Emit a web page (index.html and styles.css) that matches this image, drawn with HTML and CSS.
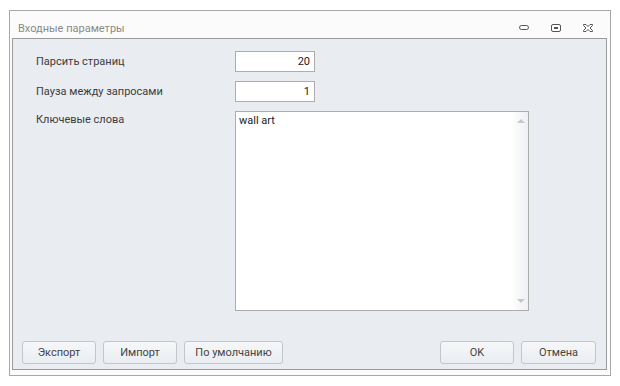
FILE: index.html
```html
<!DOCTYPE html>
<html lang="ru">
    <head>
        <meta charset="UTF-8">
        <title>Входные параметры</title>
        <link rel="stylesheet" href="styles.css">
    </head>
    <body>
        <div class="window">
            <div class="title-bar">
                <span class="title">Входные параметры</span>
                <div class="controls">
                    <svg width="12" height="8" viewBox="0 0 12 8"><rect x="1.5" y="2.5" width="9" height="4" rx="2" fill="none" stroke="#555"/></svg>
                    <svg width="12" height="10" viewBox="0 0 12 10"><rect x="1.5" y="1.5" width="9" height="7" rx="1.5" fill="none" stroke="#555"/><rect x="4" y="4" width="4" height="2" fill="#555"/></svg>
                    <svg width="12" height="10" viewBox="0 0 12 10"><path d="M1.5 1.5 L4 1.5 L6 3.5 L8 1.5 L10.5 1.5 L10.5 2.5 L8 5 L10.5 7.5 L10.5 8.5 L8 8.5 L6 6.5 L4 8.5 L1.5 8.5 L1.5 7.5 L4 5 L1.5 2.5 Z" fill="none" stroke="#555"/></svg>
                </div>
            </div>
            <div class="panel">
                <div class="form">
                    <label>Парсить страниц</label>
                    <input class="num" type="text" value="20">
                    <label>Пауза между запросами</label>
                    <input class="num" type="text" value="1">
                    <label class="top">Ключевые слова</label>
                    <div class="memo">
                        <div class="memo-text">wall art</div>
                        <div class="scroll">
                            <span class="arrow-up"></span>
                            <span class="arrow-down"></span>
                        </div>
                    </div>
                </div>
                <div class="buttons">
                    <button class="btn">Экспорт</button>
                    <button class="btn">Импорт</button>
                    <button class="btn wide">По умолчанию</button>
                    <span class="spacer"></span>
                    <button class="btn">OK</button>
                    <button class="btn last">Отмена</button>
                </div>
            </div>
        </div>
    </body>
</html>
```

FILE: styles.css
```css
body {
    margin: 0;
    background-color: #ffffff;
    font-family: Roboto, "Noto Sans", Arial, sans-serif;
    font-size: 11px;
    color: #3c3c3c;
}

.window {
    margin: 10px 9px 0 9px;
    width: 600px;
    height: 364px;
    border: 1px solid #a8a8a8;
    background-color: #fbfbfb;
    display: flex;
    flex-direction: column;
}

.title-bar {
    height: 27px;
    display: flex;
    align-items: center;
    justify-content: space-between;
    padding-left: 8px;
}

.title {
    color: #8a8a8a;
    padding-top: 7px;
}

.controls {
    display: flex;
    gap: 20px;
    padding-right: 16px;
    padding-top: 6px;
}

.panel {
    flex: 1;
    margin: 0 3px 5px 2px;
    border: 1px solid #9a9a9a;
    background-color: #e9ecf1;
    display: flex;
    flex-direction: column;
    padding: 12px 10px 5px 9px;
}

.form {
    flex: 1;
    display: grid;
    grid-template-columns: 199px 294px;
    grid-template-rows: 21px 21px 200px;
    row-gap: 9px;
    padding-left: 14px;
}

.form label {
    display: flex;
    align-items: center;
    height: 21px;
}

.form label.top {
    height: 16px;
}

.num {
    width: 80px;
    height: 21px;
    box-sizing: border-box;
    border: 1px solid #adadad;
    background-color: #ffffff;
    text-align: right;
    padding: 0 4px;
    font-family: inherit;
    font-size: 11px;
    color: #222;
    margin: 0;
}

.memo {
    display: flex;
    border: 1px solid #adadad;
    background-color: #ffffff;
}

.memo-text {
    flex: 1;
    padding: 2px 3px;
    color: #222;
}

.scroll {
    width: 15px;
    background: linear-gradient(to right, #fdfdfd, #eef0f3);
    display: flex;
    flex-direction: column;
    justify-content: space-between;
    align-items: center;
    padding: 7px 0;
}

.arrow-up {
    width: 0;
    height: 0;
    border-left: 4px solid transparent;
    border-right: 4px solid transparent;
    border-bottom: 4px solid #c4c8cd;
}

.arrow-down {
    width: 0;
    height: 0;
    border-left: 4px solid transparent;
    border-right: 4px solid transparent;
    border-top: 4px solid #c4c8cd;
}

.buttons {
    display: flex;
    gap: 7px;
}

.btn {
    width: 74px;
    height: 23px;
    border: 1px solid #c3c6cc;
    border-radius: 3px;
    background: linear-gradient(to bottom, #f6f7f9, #eaedf1);
    font-family: inherit;
    font-size: 11px;
    color: #444;
    padding: 0;
}

.btn.wide {
    width: 99px;
}

.btn.last {
    width: 75px;
}

.spacer {
    flex: 1;
}
```
